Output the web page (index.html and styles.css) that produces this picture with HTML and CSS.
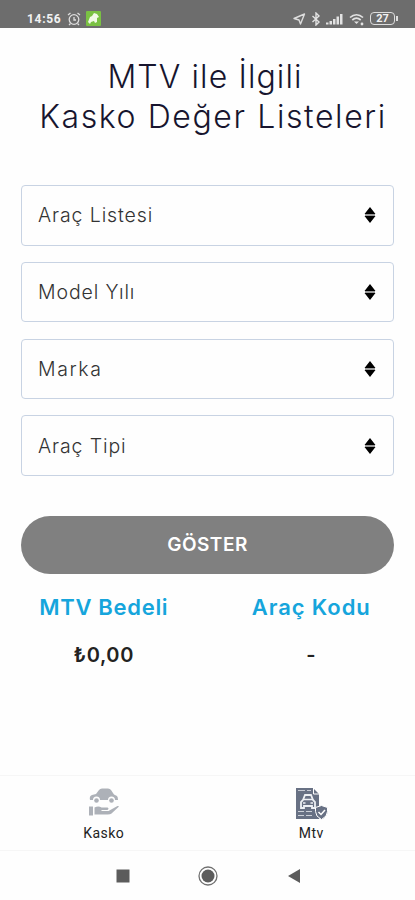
FILE: index.html
```html
<!DOCTYPE html>
<html lang="tr">
<head>
    <meta charset="UTF-8">
    <meta name="viewport" content="width=device-width, initial-scale=1.0">
    <title>Kasko Değer Listeleri</title>
    <link rel="stylesheet" href="styles.css">
</head>
<body>
    <div class="status-bar">
        <span class="time">14:56</span>
        <svg class="alarm" width="14" height="14" viewBox="0 0 14 14" fill="none" stroke="#ddd" stroke-width="1.3">
            <circle cx="7" cy="7.5" r="4.8"/>
            <path d="M7 5v3h2M1 3l2.5-2M13 3l-2.5-2M3.5 11.5L2 13M10.5 11.5L12 13"/>
        </svg>
        <svg class="app" width="15" height="15" viewBox="0 0 15 15">
            <rect width="15" height="15" rx="1" fill="#7ac143"/>
            <path d="M2 11l2-5 2-1 2-3 3 1 2 3-2 1v4l-2 1-1-2-3 1-1 2z" fill="#f1fae6"/>
        </svg>
        <div class="status-icons">
            <svg width="13" height="14" viewBox="0 0 13 14" fill="none" stroke="#ddd" stroke-width="1.4" stroke-linejoin="round">
                <path d="M1 6.500L11.500 2 7.500 12 6 8z"/>
            </svg>
            <svg width="10" height="14" viewBox="0 0 10 14" fill="none" stroke="#e2e2e2" stroke-width="1.4">
                <path d="M1.500 4l6.500 6-3 3V1l3 3-6.500 6"/>
            </svg>
            <svg width="17" height="14" viewBox="0 0 17 14" fill="#e2e2e2">
                <path d="M0 10.500h2.500v2H0zM3.500 9H6v3.500H3.500zM7 7h2.500v5.500H7zM10.500 4.500H13v8h-2.500zM14 2h2.500v10.500H14z"/>
            </svg>
            <svg class="wifi" width="16" height="14" viewBox="0 0 16 14" fill="none" stroke="#e2e2e2" stroke-width="1.7">
                <path d="M1 5.500c4-3.700 9-3.700 13 0M3.300 8c2.600-2.300 5.800-2.300 8.400 0"/>
                <path d="M5 9.500h5L7.500 12z" fill="#e2e2e2" stroke="none"/>
                <circle cx="13" cy="12" r="1.400" fill="#e2e2e2" stroke="none"/>
            </svg>
            <div class="battery">27</div>
        </div>
    </div>

    <main>
        <h1><span class="line-one">MTV ile İlgili</span><span>Kasko Değer Listeleri</span></h1>

        <div class="fields">
            <div class="field">
                <span>Araç Listesi</span>
                <svg width="12" height="16" viewBox="0 0 12 16"><path d="M.5 7L6 0l5.500 7zM.5 9L6 16l5.500-7z"/><path d="M1 7h10v2H1z" fill="#999"/></svg>
            </div>
            <div class="field">
                <span>Model Yılı</span>
                <svg width="12" height="16" viewBox="0 0 12 16"><path d="M.5 7L6 0l5.500 7zM.5 9L6 16l5.500-7z"/><path d="M1 7h10v2H1z" fill="#999"/></svg>
            </div>
            <div class="field marka">
                <span>Marka</span>
                <svg width="12" height="16" viewBox="0 0 12 16"><path d="M.5 7L6 0l5.500 7zM.5 9L6 16l5.500-7z"/><path d="M1 7h10v2H1z" fill="#999"/></svg>
            </div>
            <div class="field">
                <span>Araç Tipi</span>
                <svg width="12" height="16" viewBox="0 0 12 16"><path d="M.5 7L6 0l5.500 7zM.5 9L6 16l5.500-7z"/><path d="M1 7h10v2H1z" fill="#999"/></svg>
            </div>
        </div>

        <button class="show-btn">GÖSTER</button>

        <div class="results">
            <div class="result">
                <div class="label">MTV Bedeli</div>
                <div class="value">₺0,00</div>
            </div>
            <div class="result">
                <div class="label code">Araç Kodu</div>
                <div class="value">-</div>
            </div>
        </div>
    </main>

    <nav class="tabs">
        <div class="tab">
            <svg width="34" height="34" viewBox="0 0 34 34" fill="#adb1b8">
                <!-- car -->
                <path d="M3 13q-1-4 2-5l4-1 3-4q1-1.500 3-1.500h6q2 0 3 1.500l3 4.500 3 1.500q1 1 1 4h-3a3.500 3.500 0 0 0-7 0h-8a3.500 3.500 0 0 0-7 0z"/>
                <circle cx="9.500" cy="13.500" r="2.300"/>
                <circle cx="24.500" cy="13.500" r="2.300"/>
                <!-- hand -->
                <path d="M2 19.500h4v9H2zM7.500 20.500q4-2 7 0h6q2 1 0 2.500h-6v1h7l9-5q2-.5 1 1l-7 6.500q-1 1-4 1h-13z"/>
            </svg>
            <span>Kasko</span>
        </div>
        <div class="tab">
            <svg width="34" height="34" viewBox="0 0 34 34">
                <path d="M2 1h17l6 6v25H2z" fill="#687184"/>
                <path d="M19.500 1v6H25" fill="none" stroke="#fff" stroke-width="1"/>
                <path d="M4 3.500h13" stroke="#c7cbd4" stroke-width="1.200" stroke-dasharray="7 2"/>
                <!-- car on the document -->
                <path d="M9 13l2-5h6l2 5 2 2v6h-3v-2h-8v2H7v-6z" fill="none" stroke="#edf0f4" stroke-width="1.800"/>
                <path d="M10 12.500h8M9 16h2.500M16.500 16H19" stroke="#edf0f4" stroke-width="1.500"/>
                <path d="M4 24.500h15M4 28.500h15" stroke="#cdd1d9" stroke-width="1.200" stroke-dasharray="6 2"/>
                <path d="M27.500 18.500l6 2v4q0 5-6 8-6-3-6-8v-4z" fill="#687184" stroke="#fff" stroke-width="1"/>
                <path d="M24.500 25l2.500 2.500 4-4.500" fill="none" stroke="#fff" stroke-width="1.500"/>
            </svg>
            <span>Mtv</span>
        </div>
    </nav>

    <div class="system-nav">
        <svg width="14" height="14" viewBox="0 0 14 14"><path d="M.5 .5h13v13H.5z" fill="#5c5c5c"/></svg>
        <svg class="home" width="20" height="20" viewBox="0 0 20 20">
            <circle cx="10" cy="10" r="9" fill="none" stroke="#707070" stroke-width="1.300"/>
            <circle cx="10" cy="10" r="6.500" fill="#5c5c5c"/>
        </svg>
        <svg width="14" height="14" viewBox="0 0 14 14"><path d="M13 0v14L1 7z" fill="#5c5c5c"/></svg>
    </div>
</body>
</html>
```
FILE: styles.css
```css
* {
    box-sizing: border-box;
}

body {
    margin: 0;
    height: 900px;
    display: flex;
    flex-direction: column;
    background-color: #fefefe;
    color: #222;
    font-family: Inter, "Open Sans", sans-serif;
    overflow: hidden;
}

.status-bar {
    height: 28px;
    flex: none;
    display: flex;
    align-items: center;
    padding: 9px 20px 0 27px;
    background-color: #6d6d6d;
    color: #f2f2f2;
}

.time {
    width: 35px;
    font: bold 12px Roboto, sans-serif;
    letter-spacing: 0.7px;
}

.alarm {
    margin-left: 5px;
}

.app {
    margin-left: 5px;
}

.status-icons {
    display: flex;
    align-items: center;
    gap: 5px;
    margin-left: auto;
}

.wifi {
    margin-left: 1px;
}

.battery {
    position: relative;
    width: 25px;
    height: 13px;
    border: 1.5px solid #ddd;
    border-radius: 4px;
    font: bold 11px/11px Roboto, sans-serif;
    text-align: center;
}

.battery::after {
    content: "";
    position: absolute;
    right: -4px;
    top: 3px;
    width: 2px;
    height: 5px;
    background-color: #ddd;
}

main {
    height: 747px;
    padding: 29px 21px 0;
}

h1 {
    display: flex;
    flex-direction: column;
    align-items: center;
    margin: 0 -15px 0 -4px;
    color: #17152e;
    font-size: 32px;
    font-weight: 300;
    line-height: 40px;
    letter-spacing: 1.6px;
    white-space: nowrap;
}

.line-one {
    margin-right: 16px;
    letter-spacing: 1.1px;
}

.fields {
    display: flex;
    flex-direction: column;
    gap: 16.3px;
    margin-top: 48px;
}

.field {
    height: 60.5px;
    display: flex;
    align-items: center;
    justify-content: space-between;
    padding: 0 17px 0 16px;
    border: 1.5px solid #c8d3e3;
    border-radius: 4px;
    color: #333;
    font-size: 19.5px;
    font-weight: 300;
    letter-spacing: 0.9px;
}

.marka {
    letter-spacing: 1.6px;
}

.show-btn {
    display: block;
    width: 100%;
    height: 58px;
    margin-top: 40px;
    border: none;
    border-radius: 29px;
    background-color: #808080;
    color: #fff;
    font-family: inherit;
    font-size: 19px;
    font-weight: 600;
    letter-spacing: 0.5px;
}

.results {
    display: flex;
    justify-content: space-between;
    margin: 0 -21px;
    padding-top: 20px;
}

.result {
    width: 208px;
    text-align: center;
}

.label {
    color: #16a5dc;
    font-size: 22px;
    font-weight: 600;
    line-height: 26px;
    letter-spacing: 0.7px;
}

.code {
    letter-spacing: 0.9px;
}

.value {
    margin-top: 22px;
    font-size: 20px;
    font-weight: 600;
    line-height: 26px;
    letter-spacing: 0.6px;
}

.tabs {
    height: 76px;
    display: flex;
    border-top: 1px solid #f6f6f6;
    border-bottom: 1px solid #f6f6f6;
}

.tab {
    width: 50%;
    display: flex;
    flex-direction: column;
    align-items: center;
    padding-top: 11px;
    font: 14px/20px Roboto, sans-serif;
    letter-spacing: 0.5px;
}

.tab span {
    margin-top: 2px;
}

.system-nav {
    height: 49px;
    display: flex;
    align-items: center;
    justify-content: space-between;
    padding: 0 114px 0 116px;
}

.home {
    margin-right: 2px;
}
```
